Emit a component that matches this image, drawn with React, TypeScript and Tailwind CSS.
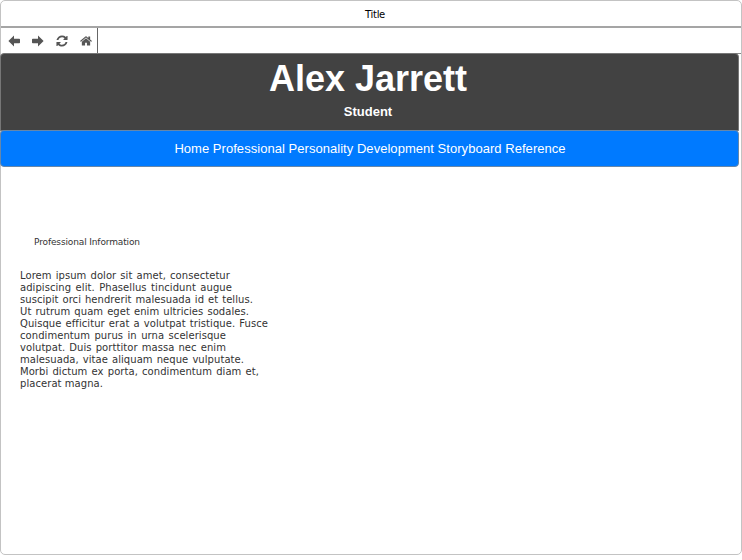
const lines = [
  { text: "Lorem ipsum dolor sit amet, consectetur", width: 210 },
  { text: "adipiscing elit. Phasellus tincidunt augue", width: 212 },
  { text: "suscipit orci hendrerit malesuada id et tellus.", width: 233 },
  { text: "Ut rutrum quam eget enim ultricies sodales.", width: 229 },
  { text: "Quisque efficitur erat a volutpat tristique. Fusce", width: 248 },
  { text: "condimentum purus in urna scelerisque", width: 206 },
  { text: "volutpat. Duis porttitor massa nec enim", width: 206 },
  { text: "malesuada, vitae aliquam neque vulputate.", width: 224 },
  { text: "Morbi dictum ex porta, condimentum diam et,", width: 239 },
  { text: "placerat magna.", width: 83 },
];

const iconClass = "h-3 w-3 fill-[#555555]";

function Toolbar() {
  return (
    <nav className="flex h-[25px] w-[97px] shrink-0 items-center gap-3 border-r border-[#666666] pl-[7px] pt-px">
      <svg className={iconClass} viewBox="0 0 12 12">
        <path d="M.4 6 6 .6V3.7H11.2Q12 3.7 12 4.5V7.5Q12 8.3 11.2 8.3H6V11.4Z" />
      </svg>
      <svg className={iconClass} viewBox="0 0 12 12">
        <path d="M11.6 6 6 .6V3.7H.8Q0 3.7 0 4.5V7.5Q0 8.3.8 8.3H6V11.4Z" />
      </svg>
      <svg className={iconClass} viewBox="-60 -60 1656 1656">
        <path d="M1511 928q0 5-1 7-64 268-268 434.5t-478 166.5q-146 0-282.5-55t-243.5-157l-129 129q-19 19-45 19t-45-19-19-45v-448q0-26 19-45t45-19h448q26 0 45 19t19 45-19 45l-137 137q71 66 161 102t187 36q134 0 250-65t186-179q11-17 53-117 8-23 30-23h192q13 0 22.5 9.5t9.5 22.5zm25-800v448q0 26-19 45t-45 19h-448q-26 0-45-19t-19-45 19-45l138-138q-148-137-349-137-134 0-250 65t-186 179q-11 17-53 117-8 23-30 23h-199q-13 0-22.500-9.500t-9.500-22.500v-7q65-268 270-434.500t480-166.500q146 0 284 55.500t245 156.500l130-129q19-19 45-19t45 19 19 45z" />
      </svg>
      <svg className={iconClass} viewBox="0 128 1664 1536">
        <path d="M1408 992v480q0 26-19 45t-45 19h-384v-384h-256v384h-384q-26 0-45-19t-19-45v-480q0-1 .5-3t.5-3l575-474 575 474q1 2 1 6zm223-69l-62 74q-8 9-21 11h-3q-13 0-21-7l-692-577-692 577q-12 8-24 7-13-2-21-11l-62-74q-8-10-7-23.500t11-21.500l719-599q32-26 76-26t76 26l244 204v-195q0-14 9-23t23-9h192q14 0 23 9t9 23v408l219 182q10 8 11 21.500t-7 23.500z" />
      </svg>
    </nav>
  );
}

export default function App() {
  return (
    <div className="h-[560px] w-[742px] overflow-hidden bg-white font-['DejaVu_Sans',sans-serif]">
      <main className="flex h-[555px] w-[742px] flex-col rounded-[5px] border border-[#c3c3c3]">
        <div className="flex h-[27px] shrink-0 items-center justify-center border-b-2 border-[#a5a5a5] pt-0.5 pl-2 text-[10px] text-black">
          <span className="tracking-[-0.3px]">Title</span>
        </div>
        <div className="flex h-[25px] shrink-0">
          <Toolbar />
          <div className="h-[26px] grow border-b border-[#888888]" />
        </div>
        <header className="-ml-px flex h-[78px] w-[739px] shrink-0 flex-col items-center rounded-t-[4px] border border-[#777777] bg-[#424242] font-['Liberation_Sans',Arial,sans-serif] font-bold text-white">
          <h1 className="mt-1 pr-[3px] text-[36px] leading-[42px]">Alex Jarrett</h1>
          <p className="mt-1 pr-[3px] text-[13px] leading-4">Student</p>
        </header>
        <nav className="-mt-px -ml-px flex h-[37px] w-[739px] shrink-0 items-center justify-center rounded-[4px] border border-[#6687aa] bg-[#007aff] font-['Liberation_Sans',Arial,sans-serif] text-[13px] text-white">
          <span className="whitespace-nowrap pl-px tracking-[0.04px]">Home Professional Personality Development Storyboard Reference</span>
        </nav>
        <h2 className="mt-[69px] ml-[33px] text-[9px] leading-3 tracking-[-0.13px] text-[#333333]">Professional Information</h2>
        <div className="mt-[22px] ml-[19px] text-[10px] leading-3 tracking-[0.06px] text-[#333333]">
          {lines.map((line) => (
            <p
              key={line.text}
              className="flex h-3 justify-between whitespace-pre"
              style={{ width: line.width }}
            >
              {line.text.split(" ").map((word, i) => (
                <span key={i}>{word}</span>
              ))}
            </p>
          ))}
        </div>
      </main>
    </div>
  );
}
